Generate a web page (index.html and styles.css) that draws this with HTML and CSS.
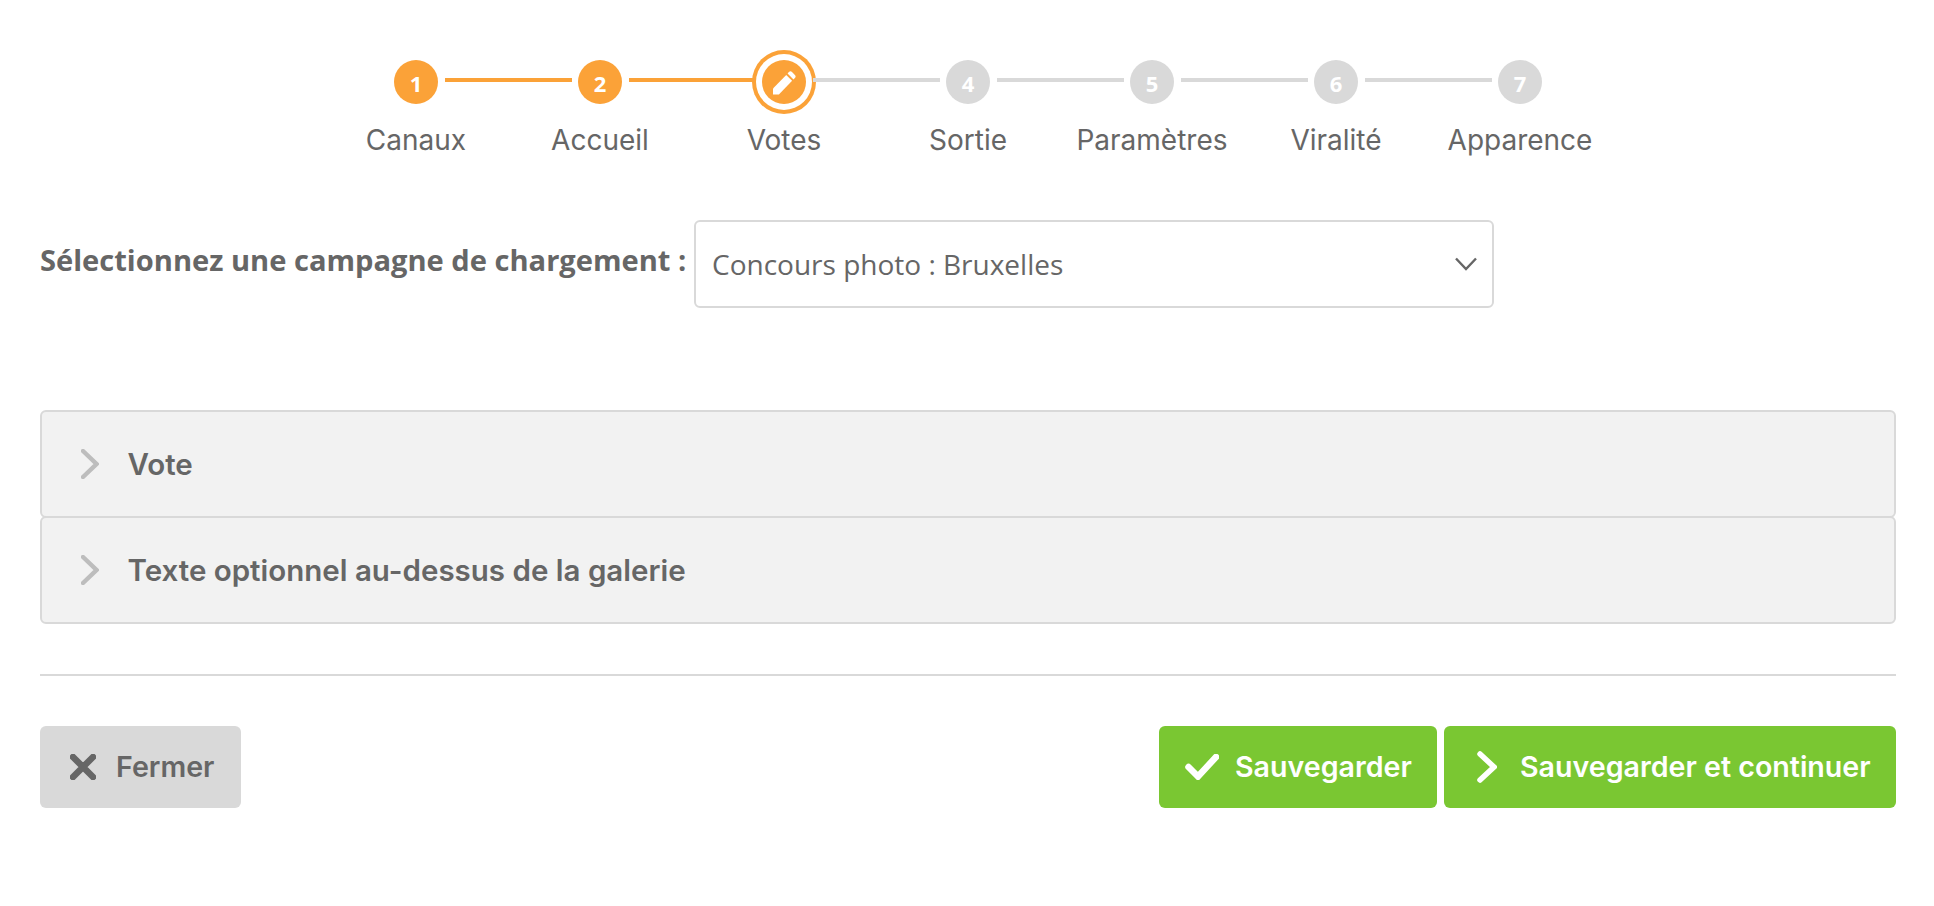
FILE: index.html
```html
<!DOCTYPE html>
<html lang="fr">
<head>
<meta charset="utf-8">
<title>Votes</title>
<link rel="stylesheet" href="styles.css">
</head>
<body>
<main class="page">
  <ol class="steps">
    <li class="step done"><span class="dot">1</span><span class="step-label">Canaux</span></li>
    <li class="step done"><span class="dot">2</span><span class="step-label">Accueil</span></li>
    <li class="step current">
      <span class="dot">
        <svg class="pencil" viewBox="0 0 24 24" aria-hidden="true"><path d="M1 17.6 14.2 3.9l5.9 5.9L6.9 23.4H1Z"/><path d="M15.6 2.5 16.9 1.1a2.2 2.2 0 0 1 3.1 0l2.9 3a2.2 2.2 0 0 1 0 3l-1.4 1.4Z"/></svg>
      </span>
      <span class="step-label">Votes</span>
    </li>
    <li class="step"><span class="dot">4</span><span class="step-label">Sortie</span></li>
    <li class="step"><span class="dot">5</span><span class="step-label">Paramètres</span></li>
    <li class="step"><span class="dot">6</span><span class="step-label">Viralité</span></li>
    <li class="step last"><span class="dot">7</span><span class="step-label">Apparence</span></li>
  </ol>

  <div class="campaign">
    <label class="campaign-label">Sélectionnez une campagne de chargement :</label>
    <div class="select">
      <span>Concours photo : Bruxelles</span>
      <svg class="select-caret" viewBox="0 0 22 14" aria-hidden="true"><path d="M1 1.5 11 12 21 1.5"/></svg>
    </div>
  </div>

  <section class="panels">
    <div class="panel">
      <svg class="panel-caret" viewBox="0 0 18 30" aria-hidden="true"><path d="M2 2 15.5 15 2 28"/></svg>
      <h2 class="panel-title">Vote</h2>
    </div>
    <div class="panel">
      <svg class="panel-caret" viewBox="0 0 18 30" aria-hidden="true"><path d="M2 2 15.5 15 2 28"/></svg>
      <h2 class="panel-title">Texte optionnel au-dessus de la galerie</h2>
    </div>
  </section>

  <hr class="rule">

  <div class="actions">
    <button class="btn btn-close" type="button">
      <svg class="icon-x" viewBox="0 0 26 26" aria-hidden="true"><path d="M3 3 23 23M23 3 3 23"/></svg>
      Fermer
    </button>
    <div class="actions-right">
      <button class="btn btn-save" type="button">
        <svg class="icon-check" viewBox="0 0 34 26" aria-hidden="true"><path d="M3.5 13 13 22.5 31 3"/></svg>
        Sauvegarder
      </button>
      <button class="btn btn-save btn-next" type="button">
        <svg class="icon-next" viewBox="0 0 20 32" aria-hidden="true"><path d="M3 3 17 16 3 29"/></svg>
        Sauvegarder et continuer
      </button>
    </div>
  </div>
</main>
</body>
</html>
```
FILE: styles.css
```css
* { box-sizing: border-box; }
html, body { margin: 0; padding: 0; background: #fff; }
body { color: #666; font-family: "Inter", "Lato", sans-serif; }
.page { padding: 50px 38px 0 40px; height: 906px; overflow: hidden; }

.steps { list-style: none; margin: 0; padding: 10px 0 0; display: flex; justify-content: center; }
.step { position: relative; width: 184px; display: flex; flex-direction: column; align-items: center; }
.step::after {
  content: ""; position: absolute; top: 18px; left: calc(50% + 29px);
  width: 127px; height: 4px; background: #d9d9d9;
}
.step.last::after { display: none; }
.step.done::after { background: #fba238; }
.step.current::after { background: #d9d9d9; }
.dot {
  position: relative; width: 44px; height: 44px; border-radius: 50%;
  background: #d9d9d9; color: #fff; display: flex; align-items: center; justify-content: center;
  font: 700 22px/1 "Open Sans", sans-serif; padding-top: 1px;
}
.done .dot, .current .dot { background: #fba238; }
.current .dot { box-shadow: 0 0 0 6px #fff, 0 0 0 10px #fba238; }
.pencil { width: 24px; height: 24px; fill: #fff; }
.step-label { margin-top: 20px; font-size: 28px; font-weight: 400; line-height: 32px; white-space: nowrap; }

.campaign { display: flex; align-items: flex-start; margin-top: 64px; }
.campaign-label { flex: none; width: 654px; font: 700 29.1px/36px "Open Sans", sans-serif; margin-top: 22px; white-space: nowrap; }
.select {
  width: 800px; height: 88px; border: 2px solid #d9d9d9; border-radius: 6px; background: #fff;
  display: flex; align-items: center; justify-content: space-between; padding: 0 15px 0 16px;
  font: 400 28px/36px "Open Sans", sans-serif;
}
.select-caret { width: 22px; height: 14px; fill: none; stroke: #666; stroke-width: 2.4; }

.panels { margin-top: 102px; }
.panel {
  height: 108px; border: 2px solid #d9d9d9; border-radius: 6px; background: #f2f2f2;
  display: flex; align-items: center; padding: 0 0 0 39px;
}
.panel + .panel { margin-top: -2px; }
.panel-caret { width: 18px; height: 30px; margin-right: 28.5px; fill: none; stroke: #bdbdbd; stroke-width: 4.4; stroke-linecap: round; }
.panel-title { margin: 0; font: 600 29.5px/36px "Inter", sans-serif; color: #666; }

.rule { margin: 50px 0; border: 0; height: 2px; background: #d9d9d9; }

.actions { display: flex; justify-content: space-between; }
.actions-right { display: flex; gap: 7px; }
.btn {
  height: 82px; border: 0; border-radius: 6px; display: flex; align-items: center;
  font: 600 28.6px/36px "Inter", sans-serif; padding: 0; white-space: nowrap;
}
.btn-close { width: 201px; background: #d9d9d9; color: #666; padding-left: 30px; gap: 20px; }
.btn-save { width: 278px; background: #7ac732; color: #fff; padding-left: 26px; gap: 16px; }
.btn-next { width: 452px; padding-left: 33px; gap: 23px; }
.icon-x { width: 26px; height: 26px; fill: none; stroke: #666; stroke-width: 6.5; stroke-linecap: round; }
.icon-check { width: 34px; height: 26px; fill: none; stroke: #fff; stroke-width: 6.5; stroke-linecap: round; }
.icon-next { width: 20px; height: 32px; fill: none; stroke: #fff; stroke-width: 5.5; stroke-linecap: round; }
```
